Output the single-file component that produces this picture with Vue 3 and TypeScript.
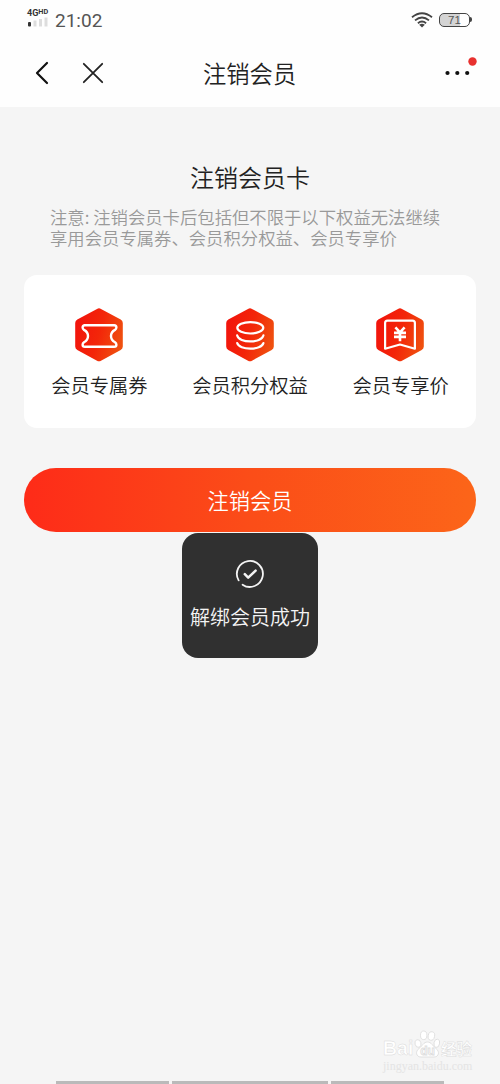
<script setup lang="ts">
type BenefitIcon = 'coupon' | 'points' | 'price'

interface Benefit {
  icon: BenefitIcon
  label: string
}

const benefits: Benefit[] = [
  { icon: 'coupon', label: '会员专属券' },
  { icon: 'points', label: '会员积分权益' },
  { icon: 'price', label: '会员专享价' },
]
const noteLines: string[] = [
  '注意: 注销会员卡后包括但不限于以下权益无法继续',
  '享用会员专属券、会员积分权益、会员专享价',
]
</script>

<template>
  <div class="screen">
    <header class="top">
      <div class="status">
        <div class="carrier">
          <div class="network">4G<span class="hd">HD</span></div>
          <svg class="signal" width="21" height="10" viewBox="0 0 21 10">
            <rect x="1" y="5" width="3" height="4.5" rx="1" fill="#333" />
            <rect x="6.5" y="3.5" width="3" height="6" fill="#ddd" />
            <rect x="12" y="2" width="3" height="7.5" fill="#ddd" />
            <rect x="17.5" y="0.5" width="3" height="9" fill="#ddd" />
          </svg>
        </div>
        <span class="time">21:02</span>
        <svg class="wifi" width="22" height="16" viewBox="0 0 22 16" fill="none" stroke="#444" stroke-width="1.8">
          <path d="M1 5.2Q11-2.8 21 5.2" />
          <path d="M4 8.4Q11 2.6 18 8.4" />
          <path d="M6.9 11.2Q11 7.8 15.1 11.2" />
          <path d="M8.2 12.7Q11 10.6 13.8 12.7L11 15.4Z" fill="#444" stroke="none" />
        </svg>
        <div class="battery"><span class="level">71</span></div>
      </div>
      <nav class="nav">
        <svg class="back" width="14" height="24" viewBox="0 0 14 24" fill="none" stroke="#111" stroke-width="2.2" stroke-linecap="round" stroke-linejoin="round">
          <path d="M12 2L2 12L12 22" />
        </svg>
        <svg class="close" width="22" height="22" viewBox="0 0 22 22" fill="none" stroke="#222" stroke-width="1.8" stroke-linecap="round">
          <path d="M1.8 1.8L20.2 20.2M20.2 1.8L1.8 20.2" />
        </svg>
        <h1 class="title">注销会员</h1>
        <svg class="more" width="36" height="24" viewBox="0 0 36 24">
          <circle cx="4.5" cy="16" r="2.1" fill="#111" />
          <circle cx="14.3" cy="16" r="2.1" fill="#111" />
          <circle cx="24.2" cy="16" r="2.1" fill="#111" />
          <circle cx="29.5" cy="4.5" r="4.2" fill="#e8312f" />
        </svg>
      </nav>
    </header>

    <main class="body">
      <h2 class="heading">注销会员卡</h2>
      <p class="note">
        <span v-for="line in noteLines" :key="line" class="note-line">{{ line }}</span>
      </p>

      <section class="card">
        <div v-for="item in benefits" :key="item.icon" class="benefit">
          <svg class="hex" width="50" height="54" viewBox="10 8 50 54" fill="none" stroke="#fff" stroke-width="2.2" stroke-linecap="round" stroke-linejoin="round">
            <defs>
              <linearGradient :id="`hex-${item.icon}`" x1="0" x2="1" y1="0.35" y2="0.65">
                <stop offset="0" stop-color="#f2140c" />
                <stop offset="0.5" stop-color="#f32609" />
                <stop offset="1" stop-color="#ef5210" />
              </linearGradient>
            </defs>
            <path
              d="M33 8.9Q35 7.8 37 8.9L56.7 19.6Q58.8 20.9 58.8 23V46.5Q58.8 48.6 56.7 49.9L37 60.7Q35 61.8 33 60.7L13.3 49.9Q11.2 48.6 11.2 46.5V23Q11.2 20.9 13.3 19.6Z"
              :fill="`url(#hex-${item.icon})`"
              stroke="none"
            />
            <path
              v-if="item.icon === 'coupon'"
              stroke-width="2.4"
              d="M20.5 25.3H50.1Q52.4 25.3 52.4 27.6Q52.4 29 51 29.9Q47 32 47 36Q47 40.2 51 42.3Q52.4 43.3 52.4 44.7Q52.4 46.8 50.1 46.8H20.9Q18.6 46.8 18.6 44.7Q18.6 43.3 20 42.3Q24 40.2 24 36Q24 32 20 29.9Q18.6 29 18.6 27.6Q18.6 25.3 20.9 25.3Z"
            />
            <g v-else-if="item.icon === 'points'">
              <ellipse cx="35.3" cy="27.8" rx="13" ry="5.7" />
              <path d="M22.2 35.4C24 43.4 46.5 43.4 48.4 35.4" />
              <path d="M22.2 43.1C24 50.4 46.5 50.4 48.4 43.1" />
            </g>
            <g v-else>
              <path d="M22.5 20.6H47.5Q49.9 20.6 49.9 23V48.7L35 44.5L20.1 48.7V23Q20.1 20.6 22.5 20.6Z" />
              <path d="M30.4 27.4L35 32.4L39.6 27.4M29 32.9H41M29 36.9H41M35 32.4V41.2" stroke-width="2.6" stroke-linecap="butt" />
            </g>
          </svg>
          <span class="benefit-label">{{ item.label }}</span>
        </div>
      </section>

      <button class="submit" type="button">注销会员</button>
    </main>

    <div class="toast" role="status">
      <svg width="30" height="30" viewBox="0 0 30 30" fill="none" stroke="#f4f4f4" stroke-linecap="round" stroke-linejoin="round">
        <path d="M3.4 21A13 13 0 1 1 7.2 25.4" stroke-width="1.8" transform="rotate(-2 15 15)" />
        <path d="M9.8 15.2L13.2 18.7L20.6 11.7" stroke-width="2.5" />
      </svg>
      <span class="toast-text">解绑会员成功</span>
    </div>

    <footer class="bottom">
      <div class="watermark">
        <div class="brand">
          <span class="latin">Bai</span>
          <svg class="paw" width="27" height="28" viewBox="0 0 27 28" fill="#fff" stroke="#dedede" stroke-width="0.9">
            <ellipse cx="4" cy="13.5" rx="3" ry="3.9" transform="rotate(-15 4 13.5)" />
            <ellipse cx="9.7" cy="5.3" rx="3.2" ry="4.3" />
            <ellipse cx="17.4" cy="6" rx="3.2" ry="4.3" transform="rotate(12 17.4 6)" />
            <ellipse cx="22.8" cy="13.3" rx="2.8" ry="4.2" transform="rotate(12 22.8 13.3)" />
            <path d="M13.5 12C9.5 12 8.5 16 5 18.5C1 21.5 2 27 7 27H20C25 27 26 21.5 22 18.5C18.5 16 17.5 12 13.5 12Z" />
            <text x="13.5" y="25" text-anchor="middle" class="du">du</text>
          </svg>
          <span class="chinese">经验</span>
        </div>
        <div class="site">jingyan.baidu.com</div>
      </div>
      <div class="strip"><i class="seg"></i><i class="seg wide"></i><i class="seg"></i></div>
    </footer>
  </div>
</template>

<style>
body {
  margin: 0;
  background: #f5f5f5;
}
</style>

<style scoped>
.screen {
  position: relative;
  display: flex;
  flex-direction: column;
  width: 500px;
  height: 1084px;
  overflow: hidden;
  background: #f5f5f5;
  color: #222;
  font-family: "Noto Sans CJK SC", sans-serif;
  font-weight: 350;
}
.top {
  height: 107px;
  background: #fefefe;
}
.status {
  display: flex;
  align-items: center;
  box-sizing: border-box;
  height: 40px;
  padding: 0 30px 0 27px;
}
.carrier {
  display: flex;
  flex-direction: column;
  width: 28px;
  margin-top: -4px;
}
.network {
  display: flex;
  align-items: flex-start;
  height: 8px;
  font: 700 9px/9px Roboto, sans-serif;
  color: #333;
}
.hd {
  font-size: 7.3px;
  line-height: 6px;
}
.time {
  flex: 1;
  font: 400 19px/24px Roboto, sans-serif;
  color: #555;
  padding-top: 1px;
}
.wifi {
  margin: -1px 6px 0 0;
}
.battery {
  position: relative;
  box-sizing: border-box;
  width: 31px;
  height: 14px;
  margin-top: -1px;
  border: 1.5px solid #444;
  border-radius: 5px;
  background: linear-gradient(90deg, #d4d4d4 70%, #fff 70%);
  text-align: center;
}
.battery::after {
  content: "";
  position: absolute;
  right: -3px;
  top: 3px;
  width: 2px;
  height: 5px;
  border-radius: 0 2px 2px 0;
  background: #444;
}
.level {
  display: block;
  font: 400 11.5px/12px "Liberation Sans", sans-serif;
  color: #555;
}
.nav {
  display: grid;
  grid-template-columns: 47px 50px 1fr 62px;
  align-items: center;
  height: 66px;
  padding: 0 24px 0 35px;
}
.title {
  margin: 0 0 0 71px;
  font-size: 23.3px;
  font-weight: 350;
  line-height: 34px;
}
.more {
  margin: -9px 0 0 29px;
}
.body {
  flex: 1;
  display: flex;
  flex-direction: column;
  align-items: stretch;
  padding: 52px 24px 0;
}
.heading {
  margin: 0;
  font-size: 24px;
  font-weight: 350;
  line-height: 36px;
  text-align: center;
}
.note {
  display: flex;
  flex-direction: column;
  margin: 11px 0 0 26px;
  font-size: 17.35px;
  line-height: 21px;
  color: #999;
  white-space: nowrap;
}
.card {
  display: grid;
  grid-template-columns: repeat(3, 1fr);
  box-sizing: border-box;
  height: 153px;
  margin-top: 27px;
  padding-top: 33px;
  border-radius: 13px;
  background: #fff;
}
.benefit {
  display: flex;
  flex-direction: column;
  align-items: center;
}
.benefit:last-child .hex {
  margin-right: 2px;
}
.benefit-label {
  margin-top: 8px;
  font-size: 19.3px;
  line-height: 30px;
  white-space: nowrap;
}
.submit {
  height: 64px;
  margin-top: 40px;
  padding: 0;
  border: 0;
  border-radius: 32px;
  background: linear-gradient(90deg, #fe2b18, #fb4d18 50%, #fc6519);
  color: #fff;
  font: 350 21.2px/62px "Noto Sans CJK SC", sans-serif;
}
.toast {
  position: absolute;
  left: 182px;
  top: 533px;
  display: flex;
  flex-direction: column;
  align-items: center;
  box-sizing: border-box;
  width: 136px;
  height: 125px;
  padding-top: 26px;
  border-radius: 16px;
  background: #303030;
  color: #f4f4f4;
}
.toast-text {
  margin-top: 13px;
  font-size: 20px;
  line-height: 30px;
  white-space: nowrap;
}
.bottom {
  display: flex;
  flex-direction: column;
  height: 56px;
}
.watermark {
  flex: 1;
  margin-left: 383px;
}
.brand {
  display: flex;
  align-items: flex-end;
  height: 30px;
  color: #fff;
  -webkit-text-stroke: 0.4px #d8d8d8;
}
.latin {
  width: 31px;
  font: 700 19.5px/19px "Liberation Sans", sans-serif;
}
.du {
  fill: #fff;
  font: 700 12px "Liberation Sans", sans-serif;
}
.chinese {
  font-size: 15.5px;
  font-weight: 700;
  line-height: 19px;
}
.site {
  margin-top: 2px;
  font: 400 12px/13px "Liberation Serif", serif;
  color: #e4e4e4;
}
.strip {
  display: flex;
  gap: 3px;
  height: 3.5px;
  padding: 0 56px;
}
.seg {
  width: 113px;
  background: #bababa;
}
.wide {
  width: 156px;
}
</style>
